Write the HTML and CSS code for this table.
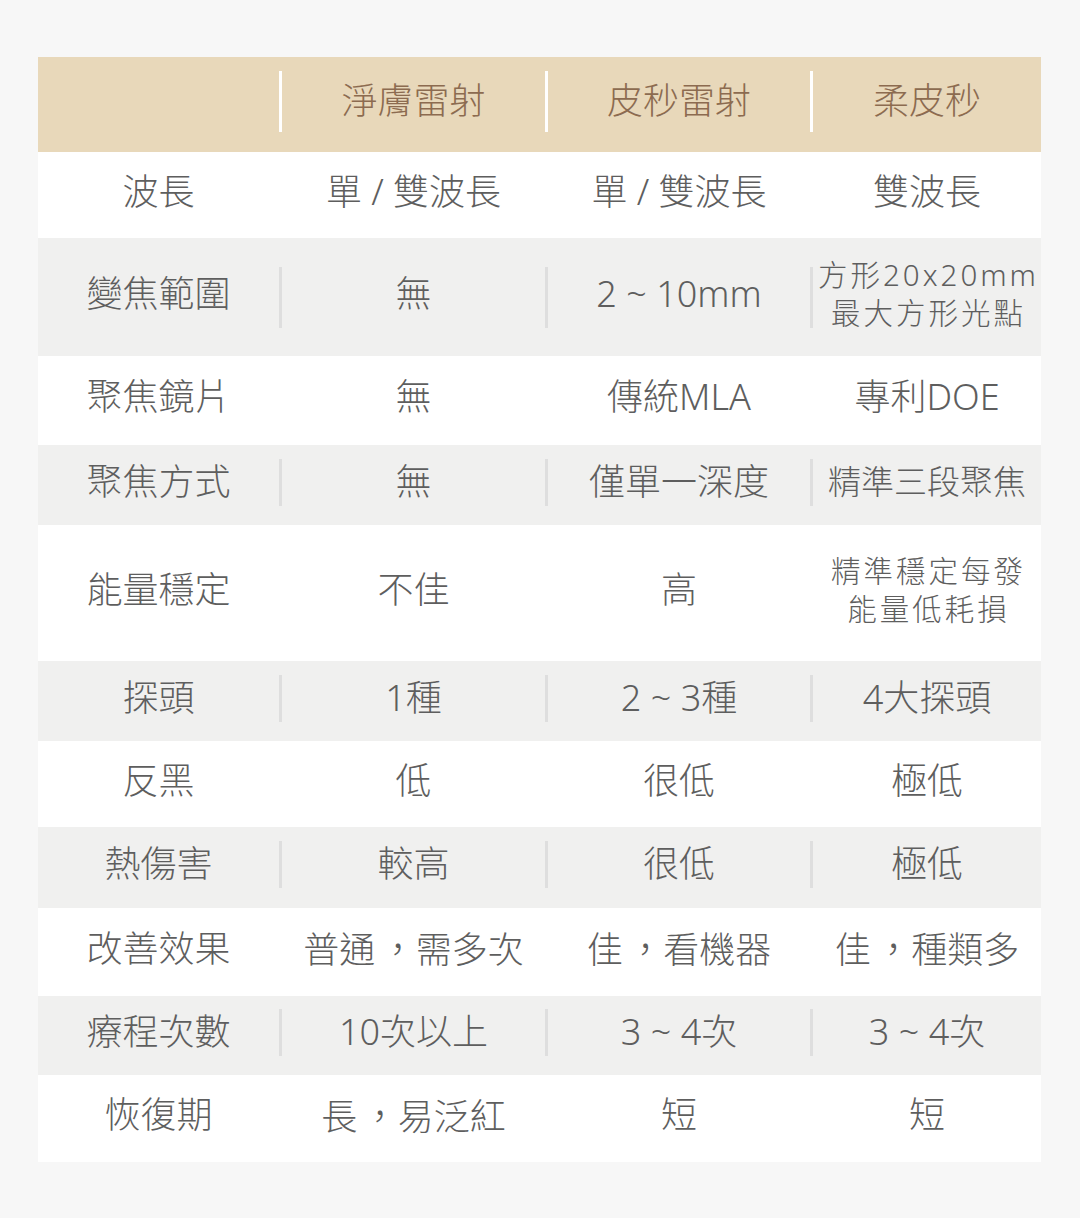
FILE: index.html
```html
<!DOCTYPE html>
<html lang="zh-Hant">
<head>
<meta charset="utf-8">
<title>雷射比較表</title>
<link rel="stylesheet" href="styles.css">
</head>
<body>
<div class="table">
  <div class="row row-head">
    <div class="cell"></div><span class="sep"></span>
    <div class="cell">淨膚雷射</div><span class="sep"></span>
    <div class="cell">皮秒雷射</div><span class="sep"></span>
    <div class="cell">柔皮秒</div>
  </div>
  <div class="row light h86">
    <div class="cell">波長</div><span class="sep"></span>
    <div class="cell">單 / 雙波長</div><span class="sep"></span>
    <div class="cell">單 / 雙波長</div><span class="sep"></span>
    <div class="cell">雙波長</div>
  </div>
  <div class="row gray h118">
    <div class="cell">變焦範圍</div><span class="sep tall"></span>
    <div class="cell">無</div><span class="sep tall"></span>
    <div class="cell">2 ~ 10mm</div><span class="sep tall"></span>
    <div class="cell small">方形20x20mm<br>最大方形光點</div>
  </div>
  <div class="row light h89">
    <div class="cell">聚焦鏡片</div><span class="sep"></span>
    <div class="cell">無</div><span class="sep"></span>
    <div class="cell">傳統MLA</div><span class="sep"></span>
    <div class="cell">專利DOE</div>
  </div>
  <div class="row gray h80">
    <div class="cell">聚焦方式</div><span class="sep"></span>
    <div class="cell">無</div><span class="sep"></span>
    <div class="cell">僅單一深度</div><span class="sep"></span>
    <div class="cell mid">精準三段聚焦</div>
  </div>
  <div class="row light h136">
    <div class="cell">能量穩定</div><span class="sep"></span>
    <div class="cell">不佳</div><span class="sep"></span>
    <div class="cell">高</div><span class="sep"></span>
    <div class="cell small">精準穩定每發<br>能量低耗損</div>
  </div>
  <div class="row gray h80">
    <div class="cell">探頭</div><span class="sep"></span>
    <div class="cell">1種</div><span class="sep"></span>
    <div class="cell">2 ~ 3種</div><span class="sep"></span>
    <div class="cell">4大探頭</div>
  </div>
  <div class="row light h86">
    <div class="cell">反黑</div><span class="sep"></span>
    <div class="cell">低</div><span class="sep"></span>
    <div class="cell">很低</div><span class="sep"></span>
    <div class="cell">極低</div>
  </div>
  <div class="row gray h81">
    <div class="cell">熱傷害</div><span class="sep"></span>
    <div class="cell">較高</div><span class="sep"></span>
    <div class="cell">很低</div><span class="sep"></span>
    <div class="cell">極低</div>
  </div>
  <div class="row light h88">
    <div class="cell">改善效果</div><span class="sep"></span>
    <div class="cell">普通<span class="punct">，</span>需多次</div><span class="sep"></span>
    <div class="cell">佳<span class="punct">，</span>看機器</div><span class="sep"></span>
    <div class="cell">佳<span class="punct">，</span>種類多</div>
  </div>
  <div class="row gray h79">
    <div class="cell">療程次數</div><span class="sep"></span>
    <div class="cell">10次以上</div><span class="sep"></span>
    <div class="cell">3 ~ 4次</div><span class="sep"></span>
    <div class="cell">3 ~ 4次</div>
  </div>
  <div class="row light h87">
    <div class="cell">恢復期</div><span class="sep"></span>
    <div class="cell">長<span class="punct">，</span>易泛紅</div><span class="sep"></span>
    <div class="cell">短</div><span class="sep"></span>
    <div class="cell">短</div>
  </div>
</div>
</body>
</html>
```

FILE: styles.css
```css
* {
  box-sizing: border-box;
}

html, body {
  margin: 0;
  padding: 0;
  background: #f7f7f7;
}

body {
  font-family: "Noto Sans", "Noto Sans CJK TC", sans-serif;
  font-weight: 300;
  color: #5e5e5e;
  height: 1218px;
}

.table {
  width: 1003px;
  margin: 57px 0 0 38px;
}

.row {
  display: grid;
  grid-template-columns: 241px 3px 263px 3px 262px 3px 228px;
  align-items: center;
  padding-bottom: 6px;
}

.cell {
  font-size: 36px;
  line-height: 1.3;
  text-align: center;
  white-space: nowrap;
}

.cell.mid {
  font-size: 33px;
}

.cell.small {
  font-size: 29.5px;
  letter-spacing: 3px;
  line-height: 37.7px;
  padding-left: 3px;
}

/* Traditional-Chinese style comma, nudged toward the centre of its cell */
.punct {
  font-family: "Noto Sans CJK TC", sans-serif;
  font-weight: 300;
  margin-left: 0.12em;
}

.sep {
  display: block;
  width: 3px;
  height: 47px;
}

.sep.tall {
  height: 61px;
  margin-top: 6px;
}

.row-head {
  height: 95px;
  background: #e8d8ba;
  color: #8c6b50;
}

.row-head .sep {
  height: 61px;
  background: #ffffff;
}

.light {
  background: #ffffff;
}

.gray {
  background: #f0f0ef;
}

.gray .sep {
  background: #dedede;
}

.h79 { height: 79px; }
.h80 { height: 80px; }
.h81 { height: 81px; }
.h86 { height: 86px; }
.h87 { height: 87px; }
.h88 { height: 88px; }
.h89 { height: 89px; }
.h118 { height: 118px; }
.h136 { height: 136px; }
```
